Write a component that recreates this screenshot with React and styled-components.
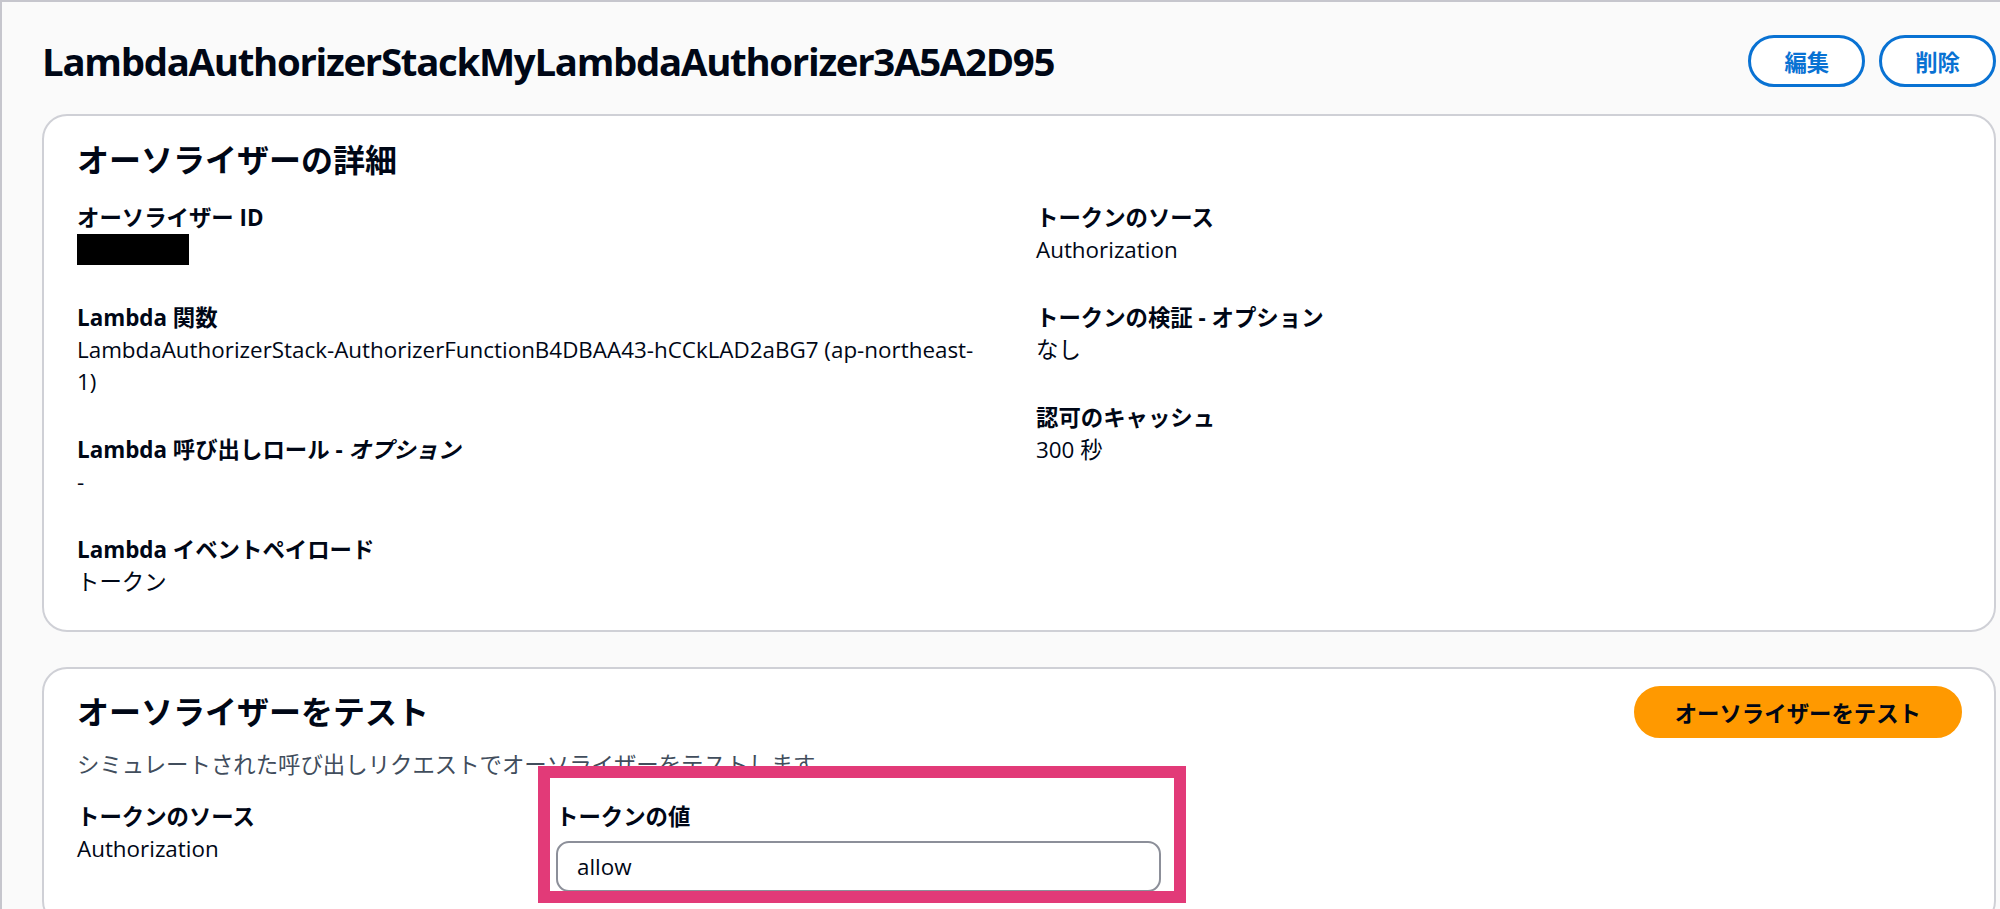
import React from 'react';
import styled, {createGlobalStyle} from 'styled-components';

const GlobalStyle = createGlobalStyle`
  html, body {
    margin:0;
    padding:0;
    background:#fafafa;
    overflow:hidden;
  }
  body{
    font-family:"Open Sans","Noto Sans CJK JP",sans-serif;
    color:#000716;
  }
`;

const Frame = styled.div`
  min-height:909px;
  box-sizing:border-box;
  border-top:2px solid #c6c6cd;
  border-left:2px solid #c6c6cd;
  padding:0 4px 0 40px;
  background:#fafafa;
`;

const PageHeader = styled.div`
  display:flex;
  align-items:center;
  justify-content:space-between;
  height:52px;
  margin-top:33px;
  margin-bottom:27px;
`;

const Title = styled.h1`
  margin:0;
  font-size:38.4px;
  line-height:48px;
  font-weight:700;
  letter-spacing:-1.3px;
`;

const Actions = styled.div`
  display:flex;
  gap:14px;
`;

const NormalButton = styled.button`
  height:52px;
  box-sizing:border-box;
  padding:0 33px;
  border:3px solid #0972d3;
  border-radius:26px;
  background:#fff;
  color:#0972d3;
  font-family:"Open Sans","Noto Sans CJK JP",sans-serif;
  font-size:22.4px;
  font-weight:700;
  cursor:pointer;
`;

const PrimaryButton = styled(NormalButton)`
  border-color:#ff9900;
  background:#ff9900;
  color:#000716;
  padding:0 38px;
`;

const Card = styled.section`
  position:relative;
  background:#fff;
  border:2px solid #cfd0d6;
  border-radius:25px;
  padding:${p => p.$top || 24}px 32px 32px 33px;
  margin-bottom:35px;
`;

const CardHeading = styled.h2`
  margin:0;
  font-size:32px;
  line-height:40px;
  font-weight:700;
`;

const HeadingRow = styled.div`
  display:flex;
  align-items:center;
  justify-content:space-between;
  height:52px;
`;

const Description = styled.p`
  margin:11px 0 0;
  font-size:22.4px;
  line-height:32px;
  color:#414d5c;
`;

const Columns = styled.div`
  display:grid;
  grid-template-columns:905px 1fr;
  column-gap:54px;
  margin-top:22px;
`;

const Column = styled.div`
  display:flex;
  flex-direction:column;
  gap:36px;
`;

const Pair = styled.div`
  display:flex;
  flex-direction:column;
`;

const Label = styled.div`
  font-size:22.4px;
  line-height:32px;
  font-weight:700;
`;

const Value = styled.div`
  font-size:22.4px;
  line-height:32px;
  font-weight:400;
`;

const Redacted = styled.span`
  display:inline-block;
  width:112px;
  height:31px;
  background:#000;
  vertical-align:top;
`;

const FieldRow = styled.div`
  display:flex;
  margin-top:20px;
`;

const SourceField = styled.div`
  width:447px;
  margin-right:32px;
`;

const ValueField = styled.div`
  position:relative;
  width:605px;
`;

const Input = styled.input`
  display:block;
  width:100%;
  height:51px;
  box-sizing:border-box;
  margin-top:8px;
  padding:0 19px;
  border:2px solid #8c8f99;
  border-radius:13px;
  font-family:"Open Sans","Noto Sans CJK JP",sans-serif;
  font-size:22.4px;
  color:#000716;
  background:#fff;
  outline:none;
`;

// annotation frame drawn over the token value field
const Highlight = styled.div`
  position:absolute;
  top:-35px;
  left:-18px;
  right:-25px;
  bottom:-11px;
  border:12px solid #e23a78;
  pointer-events:none;
`;

const App = () => {
  return (
    <Frame>
      <GlobalStyle />
      <PageHeader>
        <Title>LambdaAuthorizerStackMyLambdaAuthorizer3A5A2D95</Title>
        <Actions>
          <NormalButton>編集</NormalButton>
          <NormalButton>削除</NormalButton>
        </Actions>
      </PageHeader>

      <Card>
        <CardHeading>オーソライザーの詳細</CardHeading>
        <Columns>
          <Column>
            <Pair>
              <Label>オーソライザー ID</Label>
              <Value><Redacted /></Value>
            </Pair>
            <Pair>
              <Label>Lambda 関数</Label>
              <Value>LambdaAuthorizerStack-AuthorizerFunctionB4DBAA43-hCCkLAD2aBG7 (ap-northeast-1)</Value>
            </Pair>
            <Pair>
              <Label>Lambda 呼び出しロール - <i>オプション</i></Label>
              <Value>-</Value>
            </Pair>
            <Pair>
              <Label>Lambda イベントペイロード</Label>
              <Value>トークン</Value>
            </Pair>
          </Column>
          <Column>
            <Pair>
              <Label>トークンのソース</Label>
              <Value>Authorization</Value>
            </Pair>
            <Pair>
              <Label>トークンの検証 - オプション</Label>
              <Value>なし</Value>
            </Pair>
            <Pair>
              <Label>認可のキャッシュ</Label>
              <Value>300 秒</Value>
            </Pair>
          </Column>
        </Columns>
      </Card>

      <Card $top={17}>
        <HeadingRow>
          <CardHeading>オーソライザーをテスト</CardHeading>
          <PrimaryButton>オーソライザーをテスト</PrimaryButton>
        </HeadingRow>
        <Description>シミュレートされた呼び出しリクエストでオーソライザーをテストします。</Description>
        <FieldRow>
          <SourceField>
            <Label>トークンのソース</Label>
            <Value>Authorization</Value>
          </SourceField>
          <ValueField>
            <Label>トークンの値</Label>
            <Input defaultValue="allow" />
            <Highlight />
          </ValueField>
        </FieldRow>
      </Card>
    </Frame>
  );
};

export default App;
